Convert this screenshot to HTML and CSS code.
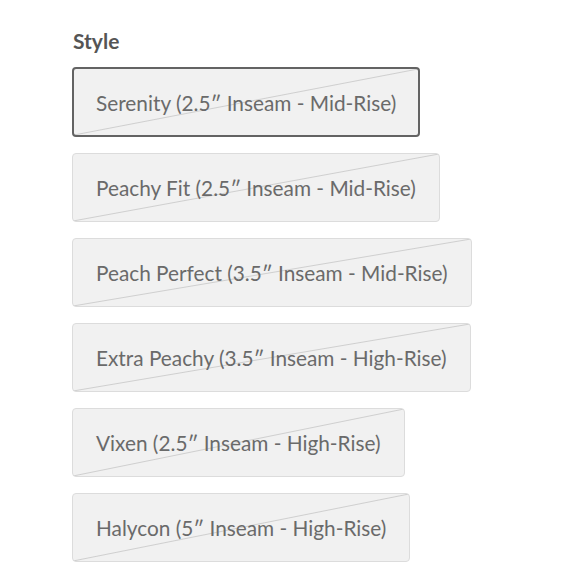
FILE: index.html
```html
<!DOCTYPE html>
<html>
<head>
<meta charset="utf-8">
<link rel="stylesheet" href="styles.css">
</head>
<body>
<div class="picker">
  <div class="label">Style</div>
  <div class="options">
    <button class="opt selected">Serenity (2.5″ Inseam - Mid-Rise)</button>
    <button class="opt">Peachy Fit (2.5″ Inseam - Mid-Rise)</button>
    <button class="opt">Peach Perfect (3.5″ Inseam - Mid-Rise)</button>
    <button class="opt">Extra Peachy (3.5″ Inseam - High-Rise)</button>
    <button class="opt">Vixen (2.5″ Inseam - High-Rise)</button>
    <button class="opt">Halycon (5″ Inseam - High-Rise)</button>
  </div>
</div>
</body>
</html>
```
FILE: styles.css
```css
html, body {
  margin: 0;
  padding: 0;
  background: #ffffff;
}
body {
  font-family: "Lato", "Liberation Sans", sans-serif;
}
.picker {
  padding: 28px 0 0 72px;
}
.label {
  font-size: 21px;
  font-weight: 700;
  color: #555555;
  line-height: 26px;
  margin-left: 1px;
}
.options {
  display: flex;
  flex-direction: column;
  align-items: flex-start;
  gap: 16px;
  margin-top: 13px;
}
.opt {
  box-sizing: border-box;
  height: 69px;
  padding: 0 23px;
  font-family: inherit;
  font-size: 20.8px;
  color: #6a6a6a;
  border: 1px solid #dcdcdc;
  border-radius: 4px;
  background-color: #f1f1f1;
  background-image: linear-gradient(to bottom right, transparent calc(50% - 1px), #cfcfcf 50%, transparent calc(50% + 1px));
  white-space: nowrap;
}
.opt.selected {
  border: 2px solid #636363;
  height: 70px;
  padding: 0 22px;
}
```
